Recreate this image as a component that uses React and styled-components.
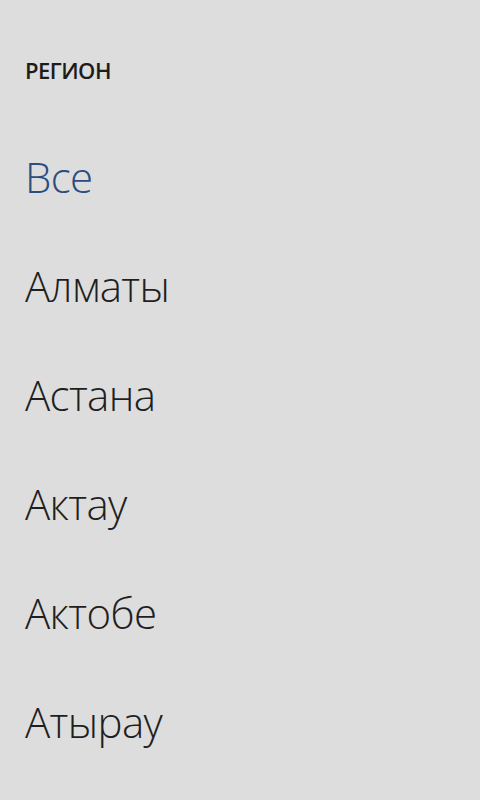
import styled, { createGlobalStyle } from "styled-components";

const regions = ["Все", "Алматы", "Астана", "Актау", "Актобе", "Атырау"];

const GlobalStyle = createGlobalStyle`
    html, body {
        margin: 0;
        padding: 0;
        background: #dddddd;
    }
`

const App = function () {
    return (
        <>
            <GlobalStyle />
            <Picker>
                <Title>РЕГИОН</Title>
                <List>
                    {regions.map((name, i) => (
                        <Item key={name} selected={i === 0}>{name}</Item>
                    ))}
                </List>
            </Picker>
        </>
    )
}

export default App;

const Picker = styled.div`
    width: 480px;
    height: 800px;
    overflow: hidden;
    box-sizing: border-box;
    padding: 55px 0 0 25px;
    background: #dddddd;
    font-family: "Open Sans", "Noto Sans", sans-serif;
`

const Title = styled.div`
    font-size: 22px;
    font-weight: 600;
    line-height: 30px;
    color: #1c1c1c;
    letter-spacing: -0.5px;
`

const List = styled.ul`
    list-style: none;
    margin: 37px 0 0;
    padding: 0;
`

const Item = styled.li`
    height: 109px;
    line-height: 109px;
    font-size: 42px;
    font-weight: 300;
    letter-spacing: -0.6px;
    color: ${props => props.selected ? '#2b4e7e' : '#1f1f1f'};
    white-space: nowrap;
`
